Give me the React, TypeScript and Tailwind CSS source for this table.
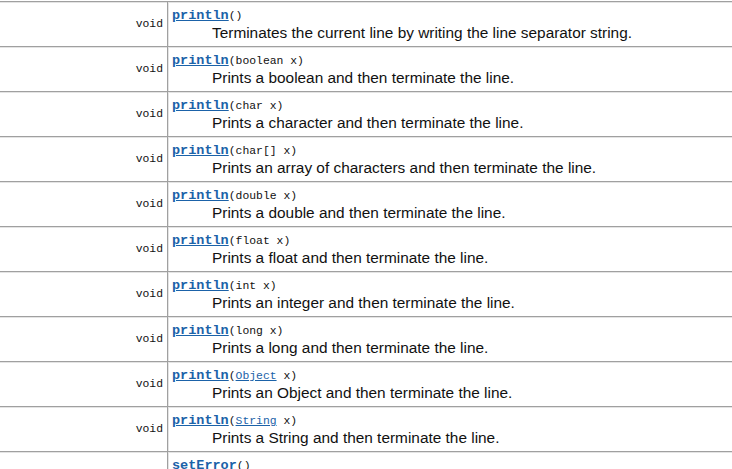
import React from "react";

type Row = { args: React.ReactNode; desc: string; name?: string };

const link = "text-[#1b62a8] underline";

const rows: Row[] = [
  { args: "()", desc: "Terminates the current line by writing the line separator string." },
  { args: "(boolean x)", desc: "Prints a boolean and then terminate the line." },
  { args: "(char x)", desc: "Prints a character and then terminate the line." },
  { args: "(char[] x)", desc: "Prints an array of characters and then terminate the line." },
  { args: "(double x)", desc: "Prints a double and then terminate the line." },
  { args: "(float x)", desc: "Prints a float and then terminate the line." },
  { args: "(int x)", desc: "Prints an integer and then terminate the line." },
  { args: "(long x)", desc: "Prints a long and then terminate the line." },
  {
    args: (
      <>
        (<span className={link}>Object</span> x)
      </>
    ),
    desc: "Prints an Object and then terminate the line.",
  },
  {
    args: (
      <>
        (<span className={link}>String</span> x)
      </>
    ),
    desc: "Prints a String and then terminate the line.",
  },
  { name: "setError", args: "()", desc: "" },
];

const mono = { fontFamily: '"Liberation Mono", "DejaVu Sans Mono", monospace' };
const sans = { fontFamily: '"Liberation Sans", Arial, sans-serif' };

export default function App() {
  return (
    <div className="w-[732px] h-[469px] overflow-hidden bg-white pt-px">
      <div className="w-[760px]">
        {rows.map((r, i) => (
          <div
            key={i}
            className="flex h-[45px] border-t border-[#a0a0a0] shadow-[inset_0_1px_0_#e4e4e4]"
          >
            <div
              className="w-[167px] shrink-0 flex items-center justify-end pr-[4px] pt-[2px] text-[11.4px] text-[#111]"
              style={mono}
            >
              {r.name ? "" : "void"}
            </div>
            <div className="w-px bg-[#a0a0a0] shrink-0" />
            <div className="w-px bg-[#e4e4e4] shrink-0" />
            <div className="flex-1 pl-[3px] pt-[7px]">
              <div className="leading-[14px] text-[11.4px] text-[#111] whitespace-pre" style={mono}>
                <span className={`${link} font-bold text-[13.5px]`}>{r.name ?? "println"}</span>
                {r.args}
              </div>
              {r.desc && (
                <div className="pl-[40px] text-[15.4px] leading-[19px] text-[#111]" style={sans}>
                  {r.desc}
                </div>
              )}
            </div>
          </div>
        ))}
      </div>
    </div>
  );
}
